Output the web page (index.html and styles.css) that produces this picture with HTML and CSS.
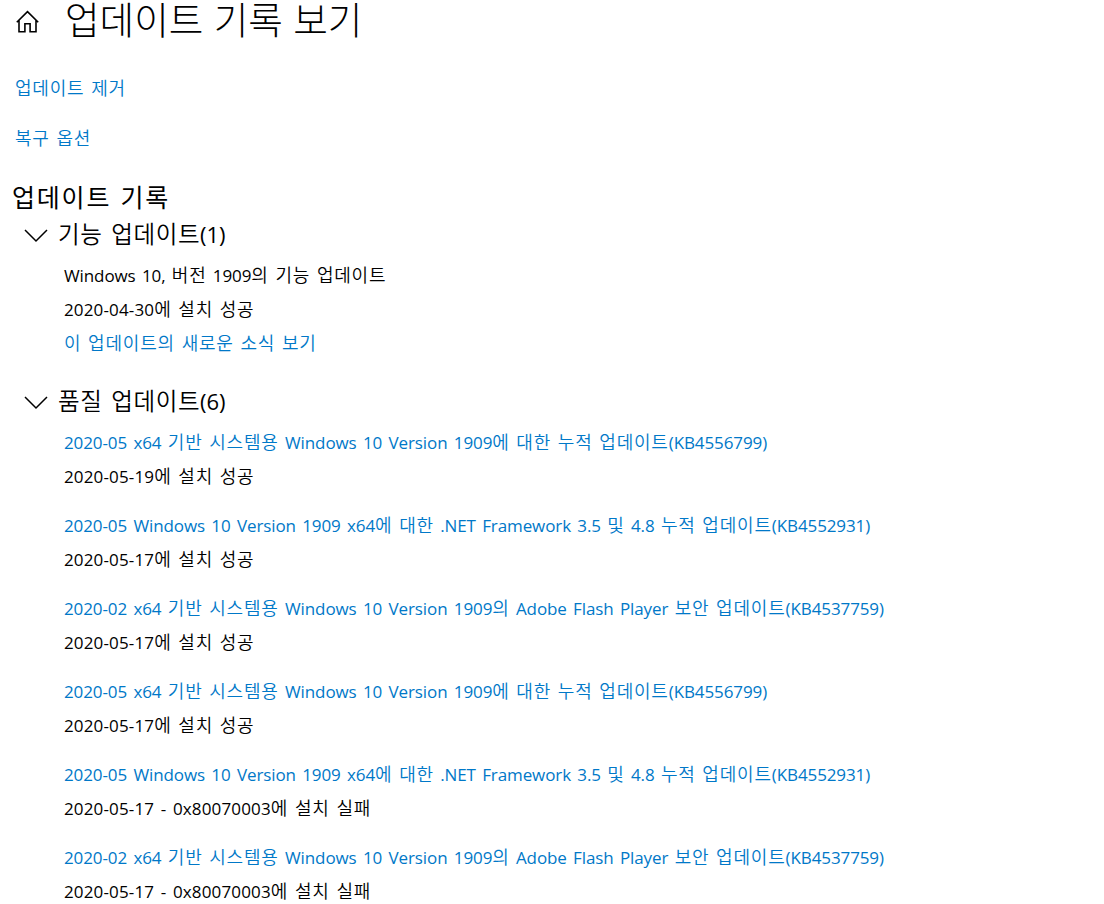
FILE: index.html
```html
<!DOCTYPE html>
<html lang="ko">
<head>
    <meta charset="UTF-8">
    <meta name="viewport" content="width=device-width, initial-scale=1.0">
    <title>업데이트 기록 보기</title>
    <link rel="stylesheet" href="styles.css">
</head>
<body>
    <header class="page-header">
        <svg class="home-icon" viewBox="0 0 24 24">
            <path d="M0.8 12.3 L11.5 1.6 L22.2 12.3 M3 10.5 V21.7 H8.9 V13.7 H14.1 V21.7 H20 V10.5"/>
        </svg>
        <h1>업데이트 기록 보기</h1>
    </header>
    <nav class="links">
        <a href="#"><span class="ko">업데이트 제거</span></a>
        <a href="#"><span class="ko">복구 옵션</span></a>
    </nav>
    <h2>업데이트 기록</h2>
    <section class="group">
        <h3>
            <svg class="chevron" viewBox="0 0 24 14"><path d="M1 1 L12 12 L23 1"/></svg>
            <span class="title"><span class="ko">기능 업데이트</span>(1)</span>
        </h3>
        <div class="update">
            <p>Windows 10, <span class="ko">버전</span> 1909<span class="ko">의 기능 업데이트</span></p>
            <p class="status">2020-04-30<span class="ko">에 설치 성공</span></p>
            <a href="#"><span class="ko">이 업데이트의 새로운 소식 보기</span></a>
        </div>
    </section>
    <section class="group">
        <h3>
            <svg class="chevron" viewBox="0 0 24 14"><path d="M1 1 L12 12 L23 1"/></svg>
            <span class="title"><span class="ko">품질 업데이트</span>(6)</span>
        </h3>
        <div class="update">
            <a href="#">2020-05 x64 <span class="ko">기반 시스템용</span> Windows 10 Version 1909<span class="ko">에 대한 누적 업데이트</span>(KB4556799)</a>
            <p class="status">2020-05-19<span class="ko">에 설치 성공</span></p>
        </div>
        <div class="update">
            <a href="#">2020-05 Windows 10 Version 1909 x64<span class="ko">에 대한</span> .NET Framework 3.5 <span class="ko">및</span> 4.8 <span class="ko">누적 업데이트</span>(KB4552931)</a>
            <p class="status">2020-05-17<span class="ko">에 설치 성공</span></p>
        </div>
        <div class="update">
            <a href="#">2020-02 x64 <span class="ko">기반 시스템용</span> Windows 10 Version 1909<span class="ko">의</span> Adobe Flash Player <span class="ko">보안 업데이트</span>(KB4537759)</a>
            <p class="status">2020-05-17<span class="ko">에 설치 성공</span></p>
        </div>
        <div class="update">
            <a href="#">2020-05 x64 <span class="ko">기반 시스템용</span> Windows 10 Version 1909<span class="ko">에 대한 누적 업데이트</span>(KB4556799)</a>
            <p class="status">2020-05-17<span class="ko">에 설치 성공</span></p>
        </div>
        <div class="update">
            <a href="#">2020-05 Windows 10 Version 1909 x64<span class="ko">에 대한</span> .NET Framework 3.5 <span class="ko">및</span> 4.8 <span class="ko">누적 업데이트</span>(KB4552931)</a>
            <p class="status">2020-05-17 - 0x80070003<span class="ko">에 설치 실패</span></p>
        </div>
        <div class="update">
            <a href="#">2020-02 x64 <span class="ko">기반 시스템용</span> Windows 10 Version 1909<span class="ko">의</span> Adobe Flash Player <span class="ko">보안 업데이트</span>(KB4537759)</a>
            <p class="status">2020-05-17 - 0x80070003<span class="ko">에 설치 실패</span></p>
        </div>
    </section>
</body>
</html>
```
FILE: styles.css
```css
* {
    box-sizing: border-box;
}
body {
    margin: 0;
    height: 904px;
    overflow: hidden;
    background: #fff;
    color: #000;
    font-family: "Open Sans", "Noto Sans CJK KR", sans-serif;
    font-size: 17px;
    line-height: 34px;
    letter-spacing: -0.1px;
    word-spacing: 2px;
    white-space: nowrap;
}
h1, h2, h3, p {
    margin: 0;
    font-weight: 400;
}
a {
    display: block;
    color: #0078c8;
    text-decoration: none;
}
svg {
    fill: none;
    stroke: #000;
    flex: none;
}
/* Hangul is set wider than the Latin text around it */
.ko {
    font-family: "Noto Sans CJK KR DemiLight", "Noto Sans CJK KR", sans-serif;
    font-weight: 350;
    font-size: 18px;
    line-height: 1;
    letter-spacing: 0.8px;
    word-spacing: 0.9px;
}
.page-header {
    display: flex;
    align-items: center;
    height: 43px;
    padding-left: 16px;
    gap: 25px;
}
.home-icon {
    width: 24px;
    height: 24px;
    stroke-width: 1.6;
}
h1 {
    margin-top: -3px;
    font-size: 37.6px;
    font-weight: 300;
    line-height: 42px;
    letter-spacing: 0;
    word-spacing: 0.6px;
}
.links {
    display: grid;
    gap: 16px;
    padding: 29px 0 0 15px;
}
h2 {
    padding: 23px 0 0 12px;
    font-size: 25px;
    line-height: 36px;
    letter-spacing: 1.8px;
    word-spacing: 1px;
}
h3 {
    display: flex;
    align-items: center;
    gap: 10px;
    height: 44px;
    padding: 0 0 3px 24px;
    font-size: 22px;
}
.title {
    margin-top: -4px;
}
.title .ko {
    font-size: 23.5px;
    font-weight: 400;
    letter-spacing: 0.6px;
    word-spacing: 1.6px;
}
.chevron {
    width: 24px;
    height: 14px;
    stroke-width: 1.5;
}
.group {
    margin-bottom: 21px;
}
.update {
    margin-bottom: 15px;
    padding-left: 64px;
}
.status {
    letter-spacing: 0.15px;
}
```
